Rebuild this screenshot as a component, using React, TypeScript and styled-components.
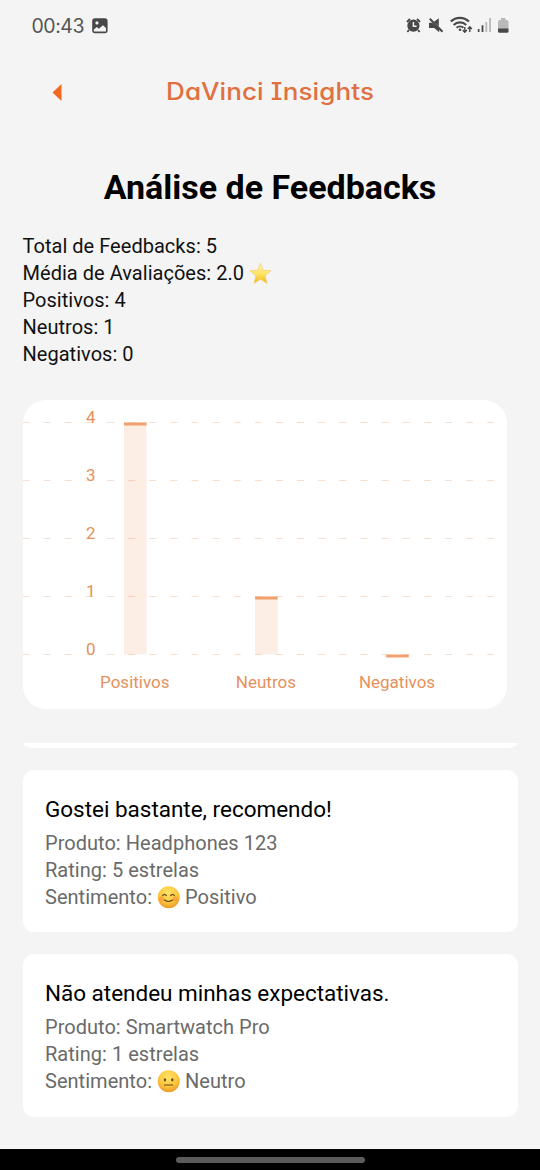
import React from 'react';
import styled, { createGlobalStyle } from 'styled-components';

const GlobalStyle = createGlobalStyle`
  *, *::before, *::after { box-sizing: border-box; }
  body { margin: 0; background: #f4f4f4; }
`;

const Screen = styled.div`
  width: 540px;
  height: 1170px;
  display: flex;
  flex-direction: column;
  overflow: hidden;
  background: #f4f4f4;
  color: #000;
  font-family: Roboto, 'Noto Sans', sans-serif;
`;

const StatusBar = styled.header`
  height: 52px;
  flex: none;
  display: flex;
  justify-content: space-between;
  align-items: center;
  padding: 0 30px 0 31.5px;
  color: #555;
`;

const Clock = styled.div`
  display: flex;
  align-items: center;
  gap: 8px;
  font-family: Inter, sans-serif;
  font-weight: 400;
  font-size: 19.5px;
  letter-spacing: -0.45px;
  line-height: 24px;
`;

const Icon = styled.svg`
  display: block;
  flex: none;
`;

const AppBar = styled.nav`
  height: 78px;
  flex: none;
  display: grid;
  grid-template-columns: 114px 1fr 114px;
  align-items: center;
  justify-items: center;
  padding-top: 2px;
`;

const Brand = styled.div`
  color: #e0703f;
  font-family: Inter, sans-serif;
  font-weight: 500;
  font-size: 24px;
  letter-spacing: 0.1px;
  line-height: 30px;
  white-space: nowrap;
  font-feature-settings: 'cv08', 'cv11';
  transform: scaleX(1.083);
`;

const Content = styled.main`
  flex: 1;
  min-height: 0;
  display: flex;
  flex-direction: column;
  padding: 0 22.5px;
`;

const Heading = styled.h1`
  margin: 34px 0 0;
  height: 46px;
  line-height: 46px;
  font-size: 34px;
  font-weight: 700;
  text-align: center;
  white-space: nowrap;
`;

const Summary = styled.section`
  margin: 23px 0 32px;
`;

const Line = styled.p<{ $muted?: boolean }>`
  margin: 0;
  display: flex;
  align-items: center;
  gap: 5px;
  height: 27px;
  line-height: 27px;
  font-size: 20px;
  letter-spacing: 0.03px;
  color: ${(p) => (p.$muted ? '#6a6a6a' : '#111')};
  white-space: nowrap;
`;

const ChartCard = styled.section`
  width: 484px;
  height: 309px;
  flex: none;
  overflow: hidden;
  border-radius: 23px;
  background: #fff;
`;

const AxisText = styled.text`
  font-family: Roboto, sans-serif;
  font-size: 17px;
  fill: #e6915c;
`;

const Divider = styled.div`
  height: 5px;
  flex: none;
  margin: 33.5px 0 22px;
  border-radius: 0 0 11px 11px / 0 0 5px 5px;
  background: #fff;
`;

const Card = styled.article`
  height: 162.5px;
  flex: none;
  margin-bottom: 22px;
  padding: 23px 22.5px;
  border-radius: 11px;
  background: #fff;
`;

const CardTitle = styled.h2`
  margin: 0 0 6px;
  height: 31px;
  line-height: 33px;
  font-size: 22.5px;
  letter-spacing: -0.02px;
  font-weight: 400;
  white-space: nowrap;
`;

const NavigationBar = styled.footer`
  height: 21px;
  flex: none;
  display: flex;
  align-items: center;
  justify-content: center;
  background: #000;
`;

const Handle = styled.div`
  width: 189px;
  height: 6px;
  border-radius: 3px;
  background: #5c5c5c;
`;

const StatusIcons = () => (
  <Icon width="105" height="20" viewBox="405 16 105 20" fill="#484848">
    <circle cx="413.4" cy="25.7" r="6.1" />
    <path d="M407 22l3-3M420 22l-3-3M409 30.2l-1.7 1.7M418 30.2l1.7 1.7" stroke="#484848" strokeWidth="1.9" />
    <path d="M413.4 22v4.2h3.2" stroke="#f4f4f4" strokeWidth="1.5" fill="none" />
    <path d="M429 22.8h3.2l7 6.2v3.2l-5-4.2H429zM434 21.8l4.8-3.6v8z" />
    <path d="M429.8 18.8l12.7 13" stroke="#484848" strokeWidth="2" />
    <g fill="none" stroke="#484848" strokeWidth="2.1">
      <path d="M450.8 21.6c5.2-5 12.8-5 18.2 0M453.6 24.9c3.7-3.4 9-3.4 12.7 0M456.5 27.8c2-1.8 5-1.8 7 0" />
    </g>
    <circle cx="460" cy="29.8" r="1.3" />
    <path d="M464.8 27v5M462.7 30l2.1 2.2 2.1-2.2M469.8 32v-5M467.7 29l2.1-2.2 2.1 2.2" stroke="#484848" strokeWidth="1.4" fill="none" />
    <path d="M477.8 29h1.7v3h-1.7zM481.6 25.2h1.8V32h-1.8z" />
    <path d="M485.4 22h1.8v10h-1.8zM489.2 18h1.8v14h-1.8z" fill="#b9b9b9" />
    <path d="M498 22q0-2 2-2h1v-2h4.5v2h1q2 0 2 2v7H498z" fill="#b9b9b9" />
    <path d="M498 28.5h10.5v2.8q0 1.5-1.5 1.5h-7.5q-1.5 0-1.5-1.5z" />
  </Icon>
);

const Picture = () => (
  <Icon width="16" height="16" viewBox="0 0 16 16">
    <rect x=".2" y=".2" width="15.4" height="15" rx="2.7" fill="#484848" />
    <circle cx="5" cy="4.9" r="1.6" fill="#f4f4f4" />
    <path d="M1.8 11.4l3-2.5 2.1 1.9 4-3.6 3.1 2.9v2.6q0 .9-.9.9H2.7q-.9 0-.9-.9z" fill="#f4f4f4" />
  </Icon>
);

const Star = () => (
  <Icon width="23" height="23" viewBox="0 0 23 23" role="img" aria-label="estrela">
    <defs>
      <linearGradient id="star" x1="0" y1="0" x2="0" y2="1">
        <stop offset="0" stopColor="#fff3bd" />
        <stop offset=".5" stopColor="#ffe568" />
        <stop offset="1" stopColor="#f4b719" />
      </linearGradient>
    </defs>
    <path d="M11.5 1.2l2.8 7 7.6.6-5.8 5 1.9 7.6-6.5-4.1L5 21.4l1.9-7.6-5.8-5 7.6-.6z" fill="url(#star)" stroke="#f1cf69" strokeWidth=".7" strokeLinejoin="round" />
  </Icon>
);

const Face = ({ mood }: { mood: 'happy' | 'neutral' }) => (
  <Icon width="23" height="23" viewBox="0 0 23 23" role="img" aria-label={mood}>
    <defs>
      <radialGradient id={`face-${mood}`} cx=".48" cy=".3" r=".7">
        <stop offset="0" stopColor="#ffe267" />
        <stop offset=".6" stopColor="#fcc83e" />
        <stop offset="1" stopColor="#e99a27" />
      </radialGradient>
    </defs>
    <circle cx="11.7" cy="11.3" r="11" fill={`url(#face-${mood})`} />
    {mood === 'happy' ? (
      <>
        <circle cx="4.8" cy="13" r="2.6" fill="#f48a3c" opacity=".55" />
        <circle cx="18.2" cy="13" r="2.6" fill="#f48a3c" opacity=".55" />
        <path d="M5.6 9.6q1.9-2.6 3.8 0M13.6 9.6q1.9-2.6 3.8 0M7.6 14q3.9 3 7.8 0" fill="none" stroke="#69431c" strokeWidth="1.2" strokeLinecap="round" />
      </>
    ) : (
      <>
        <ellipse cx="7.9" cy="9.8" rx="1.2" ry="1.6" fill="#69431c" />
        <ellipse cx="15.3" cy="9.8" rx="1.2" ry="1.6" fill="#69431c" />
        <path d="M7.4 15h8.4" stroke="#69431c" strokeWidth="1.1" strokeLinecap="round" />
      </>
    )}
  </Icon>
);

const bars = [
  { label: 'Positivos', value: 4 },
  { label: 'Neutros', value: 1 },
  { label: 'Negativos', value: 0 },
];
const BASE = 254.5;
const STEP = 58;

const BarChart = () => (
  <Icon width="484" height="309" viewBox="0 0 484 309">
    {[0, 1, 2, 3, 4].map((n) => (
      <React.Fragment key={n}>
        <line x1="-.5" x2="472" y1={BASE - n * STEP} y2={BASE - n * STEP} stroke="#f7dfcf" strokeWidth="1.2" strokeDasharray="7.04 14.08" />
        <AxisText x="67.7" y={BASE - n * STEP + 0.5} textAnchor="middle">{n}</AxisText>
      </React.Fragment>
    ))}
    {bars.map((bar, i) => {
      const x = 101 + i * 131.1;
      const y = BASE - bar.value * STEP;
      return (
        <React.Fragment key={bar.label}>
          <rect x={x} y={y} width="22.5" height={bar.value * STEP} fill="#ea8249" opacity=".14" />
          <rect x={x} y={y} width="22.5" height="3" fill="#f0a06d" />
          <AxisText x={x + 10.8} y="288" textAnchor="middle">{bar.label}</AxisText>
        </React.Fragment>
      );
    })}
  </Icon>
);

interface FeedbackProps {
  comment: string;
  product: string;
  rating: number;
  mood: 'happy' | 'neutral';
  sentiment: string;
}

const Feedback = ({ comment, product, rating, mood, sentiment }: FeedbackProps) => (
  <Card>
    <CardTitle>{comment}</CardTitle>
    <Line $muted>Produto: {product}</Line>
    <Line $muted>Rating: {rating} estrelas</Line>
    <Line $muted>
      <span>Sentimento:</span>
      <Face mood={mood} />
      <span>{sentiment}</span>
    </Line>
  </Card>
);

export default function App() {
  return (
    <Screen>
      <GlobalStyle />
      <StatusBar>
        <Clock>
          <span>00:43</span>
          <Picture />
        </Clock>
        <StatusIcons />
      </StatusBar>
      <AppBar>
        <Icon width="10" height="17" viewBox="0 0 10 17">
          <path d="M9.5 0v17L.5 8.5z" fill="#f26a21" />
        </Icon>
        <Brand>DaVinci Insights</Brand>
      </AppBar>
      <Content>
        <Heading>Análise de Feedbacks</Heading>
        <Summary>
          <Line>Total de Feedbacks: 5</Line>
          <Line>
            <span>Média de Avaliações: 2.0</span>
            <Star />
          </Line>
          <Line>Positivos: 4</Line>
          <Line>Neutros: 1</Line>
          <Line>Negativos: 0</Line>
        </Summary>
        <ChartCard>
          <BarChart />
        </ChartCard>
        <Divider />
        <Feedback comment="Gostei bastante, recomendo!" product="Headphones 123" rating={5} mood="happy" sentiment="Positivo" />
        <Feedback comment="Não atendeu minhas expectativas." product="Smartwatch Pro" rating={1} mood="neutral" sentiment="Neutro" />
      </Content>
      <NavigationBar>
        <Handle />
      </NavigationBar>
    </Screen>
  );
}
